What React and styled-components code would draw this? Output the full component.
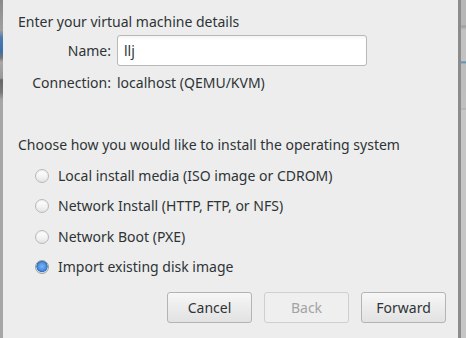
import React from "react"
import styled, { createGlobalStyle } from "styled-components"

const GlobalStyle = createGlobalStyle`
  html, body {
    margin: 0;
    padding: 0;
    width: 466px;
    height: 338px;
    overflow: hidden;
    background: #9a9a9a;
  }
`

const Screen = styled.div`
  display: flex;
  width: 466px;
  height: 338px;
  font-family: "Noto Sans", "DejaVu Sans", sans-serif;
  font-size: 14px;
  color: #2e3436;
`

const LeftEdge = styled.div`
  width: 3px;
  background: linear-gradient(
    to bottom,
    #8a8a8a 0,
    #a0a0a0 30px,
    #4a7ab0 38px,
    #3d6fa8 52px,
    #777 58px,
    #a8a8a8 62px,
    #999 78px,
    #666 80px,
    #777 92px,
    #a6a6a6 100px,
    #a6a6a6 338px
  );
`

const RightEdge = styled.div`
  width: 8px;
  display: flex;
`

const EdgeLine = styled.div`
  width: 3px;
  background: #8c8c8c;
`

const EdgeFill = styled.div`
  flex: 1;
  background: linear-gradient(
    to bottom,
    #b6b6b6 0,
    #b6b6b6 25px,
    #9c9c9c 26px,
    #c2c2c2 30px,
    #c2c2c2 61px,
    #3e8ab0 62px,
    #bcbcbc 64px,
    #c0c0c0 108px,
    #a8a8a8 109px,
    #c6c6c6 110px,
    #c6c6c6 338px
  );
`

const Dialog = styled.div`
  flex: 1;
  background: #ededed;
  display: flex;
  flex-direction: column;
  padding: 14px 0 0 15px;
`

const Heading = styled.div`
  line-height: 16px;
`

const Details = styled.div`
  display: grid;
  grid-template-columns: 93px auto;
  align-items: center;
  column-gap: 6px;
  row-gap: 9px;
  margin-top: 5px;
`

const Label = styled.div`
  justify-self: end;
  line-height: 16px;
`

const Value = styled.div`
  line-height: 16px;
`

const TextInput = styled.input`
  box-sizing: border-box;
  width: 250px;
  height: 31px;
  border: 1px solid #b8b8b8;
  border-radius: 3px;
  background: linear-gradient(to bottom, #f4f4f4 0, #ffffff 4px, #ffffff 100%);
  font: inherit;
  color: #2e3436;
  padding: 0 6px;
  outline: none;
  caret-color: #2e3436;
`

const Section = styled.div`
  margin-top: 46px;
  line-height: 16px;
`

const Options = styled.div`
  display: flex;
  flex-direction: column;
  gap: 14.3px;
  margin-top: 15px;
  padding-left: 17px;
`

const Option = styled.label`
  display: flex;
  align-items: center;
  gap: 9px;
  line-height: 16px;
`

const Radio = styled.span`
  box-sizing: border-box;
  width: 14px;
  height: 14px;
  border-radius: 50%;
  border: 1px solid ${p => (p.$checked ? "#9aa0a4" : "#b9b9b9")};
  background: ${p =>
    p.$checked
      ? "radial-gradient(circle at 50% 45%, #7fb4ee 0, #4a8fe0 45%, #2f6fc4 60%, #dcdcdc 66%, #f0f0f0 100%)"
      : "linear-gradient(to bottom, #ffffff 0, #f2f2f2 60%, #e2e2e2 100%)"};
  box-shadow: inset 0 1px 1px rgba(0, 0, 0, 0.08);
`

const Buttons = styled.div`
  margin-top: auto;
  margin-bottom: 15px;
  display: flex;
  justify-content: flex-end;
  gap: 12px;
  padding-right: 12px;
`

const Button = styled.button`
  box-sizing: border-box;
  width: 85px;
  height: 31px;
  border: 1px solid ${p => (p.disabled ? "#cfcfcf" : "#b4b4b4")};
  border-radius: 3px;
  background: ${p =>
    p.disabled
      ? "#efefef"
      : "linear-gradient(to bottom, #f7f7f7 0, #ececec 50%, #e2e2e2 100%)"};
  font: inherit;
  color: ${p => (p.disabled ? "#a3a3a3" : "#2e3436")};
  padding: 0;
`

const options = [
  { label: "Local install media (ISO image or CDROM)" },
  { label: "Network Install (HTTP, FTP, or NFS)" },
  { label: "Network Boot (PXE)" },
  { label: "Import existing disk image", checked: true },
]

export default function App() {
  return (
    <>
      <GlobalStyle />
      <Screen>
        <LeftEdge />
        <Dialog>
          <Heading>Enter your virtual machine details</Heading>
          <Details>
            <Label>Name:</Label>
            <TextInput defaultValue="llj" />
            <Label>Connection:</Label>
            <Value>localhost (QEMU/KVM)</Value>
          </Details>
          <Section>Choose how you would like to install the operating system</Section>
          <Options>
            {options.map(o => (
              <Option key={o.label}>
                <Radio $checked={o.checked} />
                {o.label}
              </Option>
            ))}
          </Options>
          <Buttons>
            <Button>Cancel</Button>
            <Button disabled>Back</Button>
            <Button>Forward</Button>
          </Buttons>
        </Dialog>
        <RightEdge>
          <EdgeLine />
          <EdgeFill />
        </RightEdge>
      </Screen>
    </>
  )
}
